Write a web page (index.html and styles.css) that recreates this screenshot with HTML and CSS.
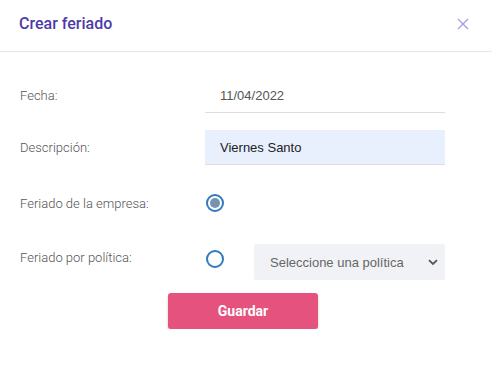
FILE: index.html
```html
<!DOCTYPE html>
<html lang="es">
<head>
  <meta charset="UTF-8" />
  <meta name="viewport" content="width=device-width, initial-scale=1.0"/>
  <title>Crear feriado</title>
  <link rel="stylesheet" href="styles.css">
</head>
<body>
  <div class="modal">
    <div class="modal-header">
      <h1>Crear feriado</h1>
      <button class="cerrar" aria-label="Cerrar">
        <svg width="12" height="12" viewBox="0 0 12 12">
          <path d="M1 1 L11 11 M11 1 L1 11" stroke="#a89fe0" stroke-width="1.4" fill="none"/>
        </svg>
      </button>
    </div>

    <div class="modal-body">
      <div class="fila">
        <label for="fecha">Fecha:</label>
        <input type="text" id="fecha" class="campo campo-fecha" value="11/04/2022" />
      </div>

      <div class="fila fila-desc">
        <label for="descripcion">Descripción:</label>
        <input type="text" id="descripcion" class="campo campo-desc" value="Viernes Santo" />
      </div>

      <div class="fila fila-radio">
        <label>Feriado de la empresa:</label>
        <div class="opciones">
          <span class="radio marcado"></span>
        </div>
      </div>

      <div class="fila fila-politica">
        <label>Feriado por política:</label>
        <div class="opciones">
          <span class="radio"></span>
          <div class="selector">
            <span>Seleccione una política</span>
            <svg width="10" height="7" viewBox="0 0 10 7">
              <path d="M1 1.2 L5 5 L9 1.2" stroke="#555" stroke-width="1.8" fill="none"/>
            </svg>
          </div>
        </div>
      </div>

      <div class="acciones">
        <button class="guardar">Guardar</button>
      </div>
    </div>
  </div>
</body>
</html>
```

FILE: styles.css
```css
body {
  margin: 0;
  background-color: #fff;
  font-family: Roboto, "Liberation Sans", sans-serif;
}

.modal {
  width: 492px;
}

.modal-header {
  display: flex;
  justify-content: space-between;
  align-items: center;
  height: 52px;
  padding: 0 19px 4px;
  border-bottom: 1px solid #e6e6e6;
  box-sizing: border-box;
}

.modal-header h1 {
  margin: 0;
  font-size: 16px;
  font-weight: 500;
  color: #4c3ba8;
}

.cerrar {
  background: none;
  border: none;
  padding: 0;
  margin-right: 4px;
  display: flex;
  cursor: pointer;
}

.modal-body {
  padding: 26px 0 0 20px;
}

.fila {
  display: flex;
  align-items: center;
  height: 35px;
}

.fila label {
  width: 185px;
  font-size: 13px;
  font-weight: 300;
  color: #555;
}

.campo {
  width: 240px;
  height: 35px;
  box-sizing: border-box;
  border: none;
  border-bottom: 1px solid #ddd;
  padding: 0 15px;
  font-family: "Liberation Sans", Arial, sans-serif;
  font-size: 13px;
  outline: none;
}

.campo-fecha {
  color: #555;
  background-color: #fff;
}

.fila-desc {
  margin-top: 17px;
}

.campo-desc {
  color: #222;
  background-color: #e8f0fe;
}

.fila-radio {
  margin-top: 20px;
  height: 36px;
}

.fila-politica {
  margin-top: 23px;
  height: 36px;
  align-items: flex-start;
}

.fila-politica label {
  padding-top: 6px;
}

.opciones {
  display: flex;
  align-items: flex-start;
  gap: 30px;
}

.fila-politica .radio {
  margin-top: 6px;
}

.radio {
  width: 18px;
  height: 18px;
  border: 2px solid #2f7ac0;
  border-radius: 50%;
  box-sizing: border-box;
  margin-left: 1px;
  display: flex;
  align-items: center;
  justify-content: center;
}

.radio.marcado::after {
  content: "";
  width: 10px;
  height: 10px;
  border-radius: 50%;
  background-color: #7893ad;
}

.selector {
  width: 191px;
  height: 36px;
  background-color: #f1f2f6;
  border-radius: 2px;
  display: flex;
  justify-content: space-between;
  align-items: center;
  padding: 0 7px 0 16px;
  box-sizing: border-box;
  font-family: "Liberation Sans", Arial, sans-serif;
  font-size: 13px;
  color: #666;
}

.acciones {
  margin-top: 13px;
  padding-left: 148px;
}

.guardar {
  width: 150px;
  height: 36px;
  background-color: #e5527d;
  color: #fff;
  border: none;
  border-radius: 3px;
  font-family: Roboto, sans-serif;
  font-size: 14px;
  font-weight: 700;
  box-shadow: 0 2px 3px rgba(0, 0, 0, 0.2);
  cursor: pointer;
}
```
